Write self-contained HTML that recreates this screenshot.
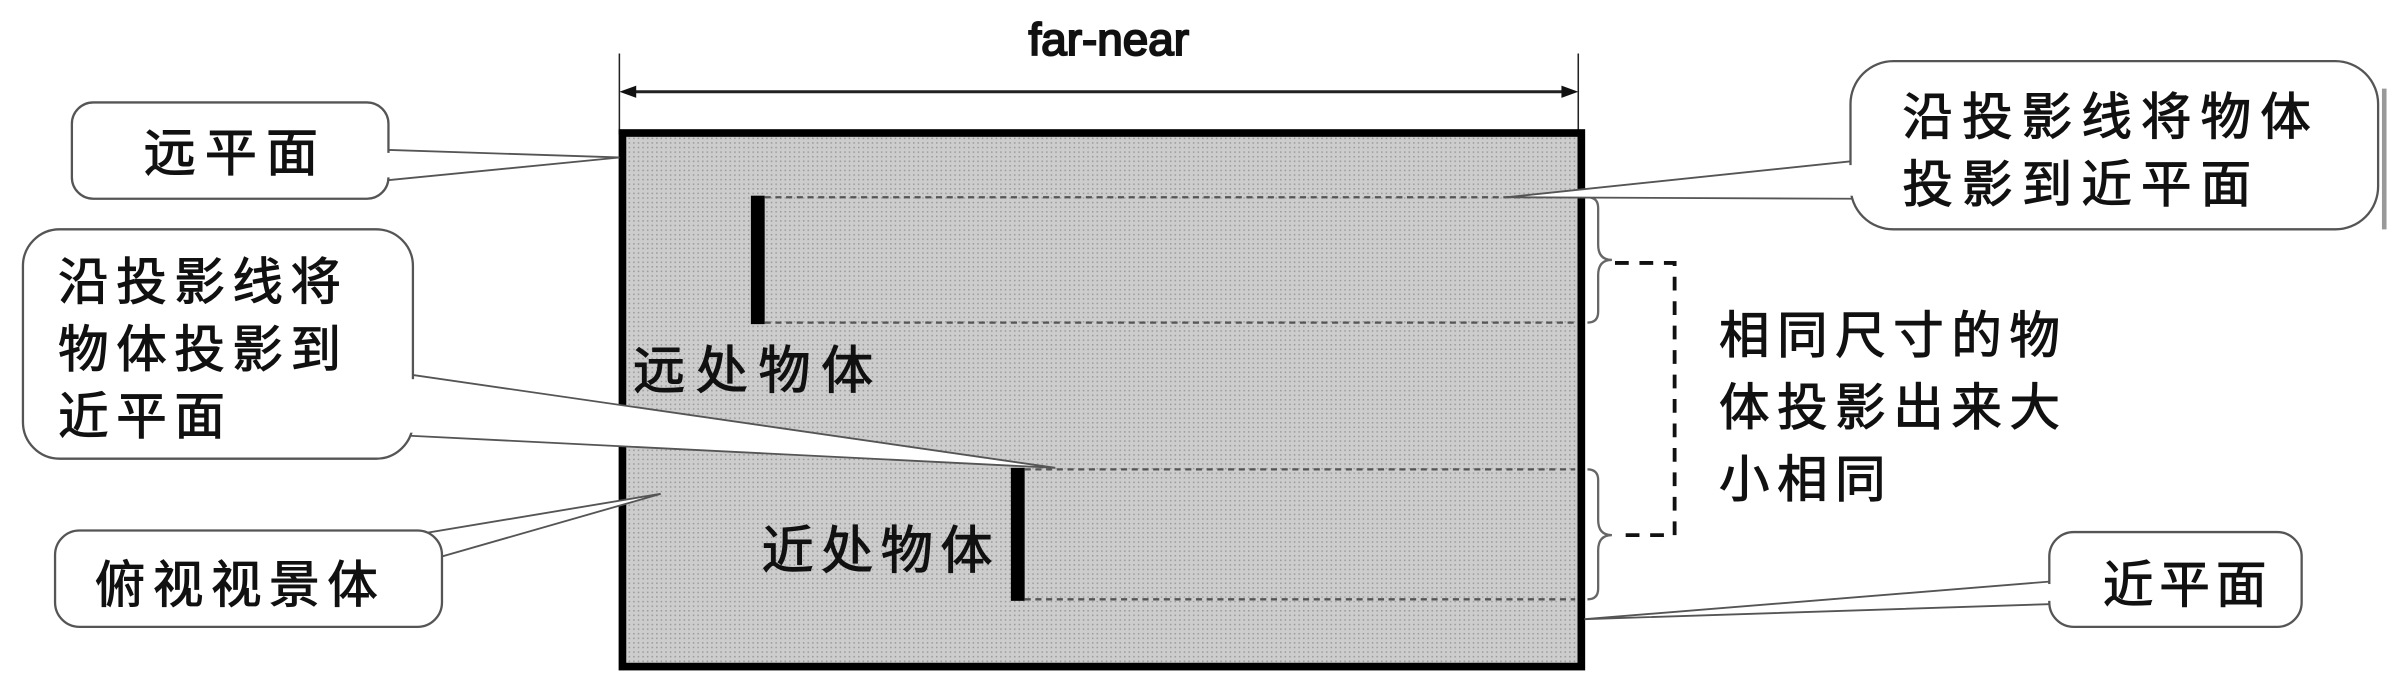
<!DOCTYPE html>
<html><head><meta charset="utf-8"><style>
html,body{margin:0;padding:0;background:#fff;}
svg{display:block;}
text{font-family:"Liberation Sans","WenQuanYi Zen Hei","Noto Sans CJK SC",sans-serif;fill:#111;stroke:#111;stroke-width:0.7;}
</style></head><body>
<svg width="2398" height="688" viewBox="0 0 1568 450" preserveAspectRatio="none" xmlns="http://www.w3.org/2000/svg">
<defs>
<pattern id="h" width="3" height="3" patternUnits="userSpaceOnUse">
<rect width="3" height="3" fill="#cdcdcd"/>
<rect width="1" height="1" fill="#9a9a9a"/>
</pattern>
</defs>
<text x="725" y="36" font-size="30" text-anchor="middle" font-family="'DejaVu Sans',sans-serif" style="stroke-width:1.3">far-near</text>
<line x1="405" y1="35" x2="405" y2="88" stroke="#222" stroke-width="1"/>
<line x1="1032" y1="35" x2="1032" y2="88" stroke="#222" stroke-width="1"/>
<line x1="410" y1="60" x2="1026" y2="60" stroke="#222" stroke-width="2"/>
<polygon points="405,60 416,56 416,64" fill="#111"/>
<polygon points="1032,60 1021,56 1021,64" fill="#111"/>
<rect x="407" y="87" width="627" height="349" fill="url(#h)" stroke="#000" stroke-width="5"/>
<rect x="491" y="128" width="9" height="84" fill="#000"/>
<line x1="500" y1="129" x2="1030" y2="129" stroke="#555" stroke-width="1.5" stroke-dasharray="4,3"/>
<line x1="500" y1="211" x2="1030" y2="211" stroke="#555" stroke-width="1.5" stroke-dasharray="4,3"/>
<rect x="661" y="306" width="9" height="87" fill="#000"/>
<line x1="670" y1="307" x2="1030" y2="307" stroke="#555" stroke-width="1.5" stroke-dasharray="4,3"/>
<line x1="670" y1="392" x2="1030" y2="392" stroke="#555" stroke-width="1.5" stroke-dasharray="4,3"/>
<text x="414" y="254" font-size="34" letter-spacing="7">远处物体</text>
<text x="498" y="372" font-size="34" letter-spacing="5">近处物体</text>
<path d="M1038,129 Q1045,129 1045,136 L1045,160 Q1045,170 1054,170 Q1045,170 1045,180 L1045,204 Q1045,211 1038,211" fill="none" stroke="#666" stroke-width="1.5"/>
<path d="M1038,307 Q1045,307 1045,314 L1045,340 Q1045,350 1054,350 Q1045,350 1045,360 L1045,385 Q1045,392 1038,392" fill="none" stroke="#666" stroke-width="1.5"/>
<path d="M1056,172 L1095,172 L1095,350 L1056,350" fill="none" stroke="#111" stroke-width="2.5" stroke-dasharray="9,7"/>
<text x="1124" y="231" font-size="33" letter-spacing="5">相同尺寸的物</text>
<text x="1124" y="278" font-size="33" letter-spacing="5">体投影出来大</text>
<text x="1124" y="325" font-size="33" letter-spacing="5">小相同</text>
<path d="M252,98 L405,103 L252,118" fill="#fff" stroke="#555" stroke-width="1.2"/>
<rect x="47" y="67" width="207" height="63" rx="14" fill="#fff" stroke="#555" stroke-width="1.5"/>
<rect x="252" y="100" width="4" height="16" fill="#fff"/>
<text x="94" y="112" font-size="34" letter-spacing="6">远平面</text>
<path d="M268,245 L690,306 L268,285" fill="#fff" stroke="#555" stroke-width="1.2"/>
<rect x="15" y="150" width="255" height="150" rx="24" fill="#fff" stroke="#555" stroke-width="1.5"/>
<rect x="266" y="248" width="6" height="35" fill="#fff"/>
<text x="38" y="196" font-size="33" letter-spacing="5">沿投影线将</text>
<text x="38" y="240" font-size="33" letter-spacing="5">物体投影到</text>
<text x="38" y="284" font-size="33" letter-spacing="5">近平面</text>
<path d="M240,355 L432,323 L240,378" fill="#fff" stroke="#555" stroke-width="1.2"/>
<rect x="36" y="347" width="253" height="63" rx="16" fill="#fff" stroke="#555" stroke-width="1.5"/>
<text x="62" y="394" font-size="33" letter-spacing="5">俯视视景体</text>
<path d="M1215,105 L985,129 L1215,130" fill="#fff" stroke="#555" stroke-width="1.2"/>
<rect x="1210" y="40" width="345" height="110" rx="28" fill="#fff" stroke="#555" stroke-width="1.5"/>
<rect x="1207" y="108" width="6" height="20" fill="#fff"/>
<line x1="1559" y1="58" x2="1559" y2="150" stroke="#999" stroke-width="3"/>
<text x="1244" y="88" font-size="33" letter-spacing="6">沿投影线将物体</text>
<text x="1244" y="132" font-size="33" letter-spacing="6">投影到近平面</text>
<path d="M1345,380 L1036,405 L1345,395" fill="#fff" stroke="#555" stroke-width="1.2"/>
<rect x="1340" y="348" width="165" height="62" rx="16" fill="#fff" stroke="#555" stroke-width="1.5"/>
<rect x="1337" y="382" width="6" height="11" fill="#fff"/>
<text x="1375" y="394" font-size="33" letter-spacing="4">近平面</text>
</svg>
</body></html>
